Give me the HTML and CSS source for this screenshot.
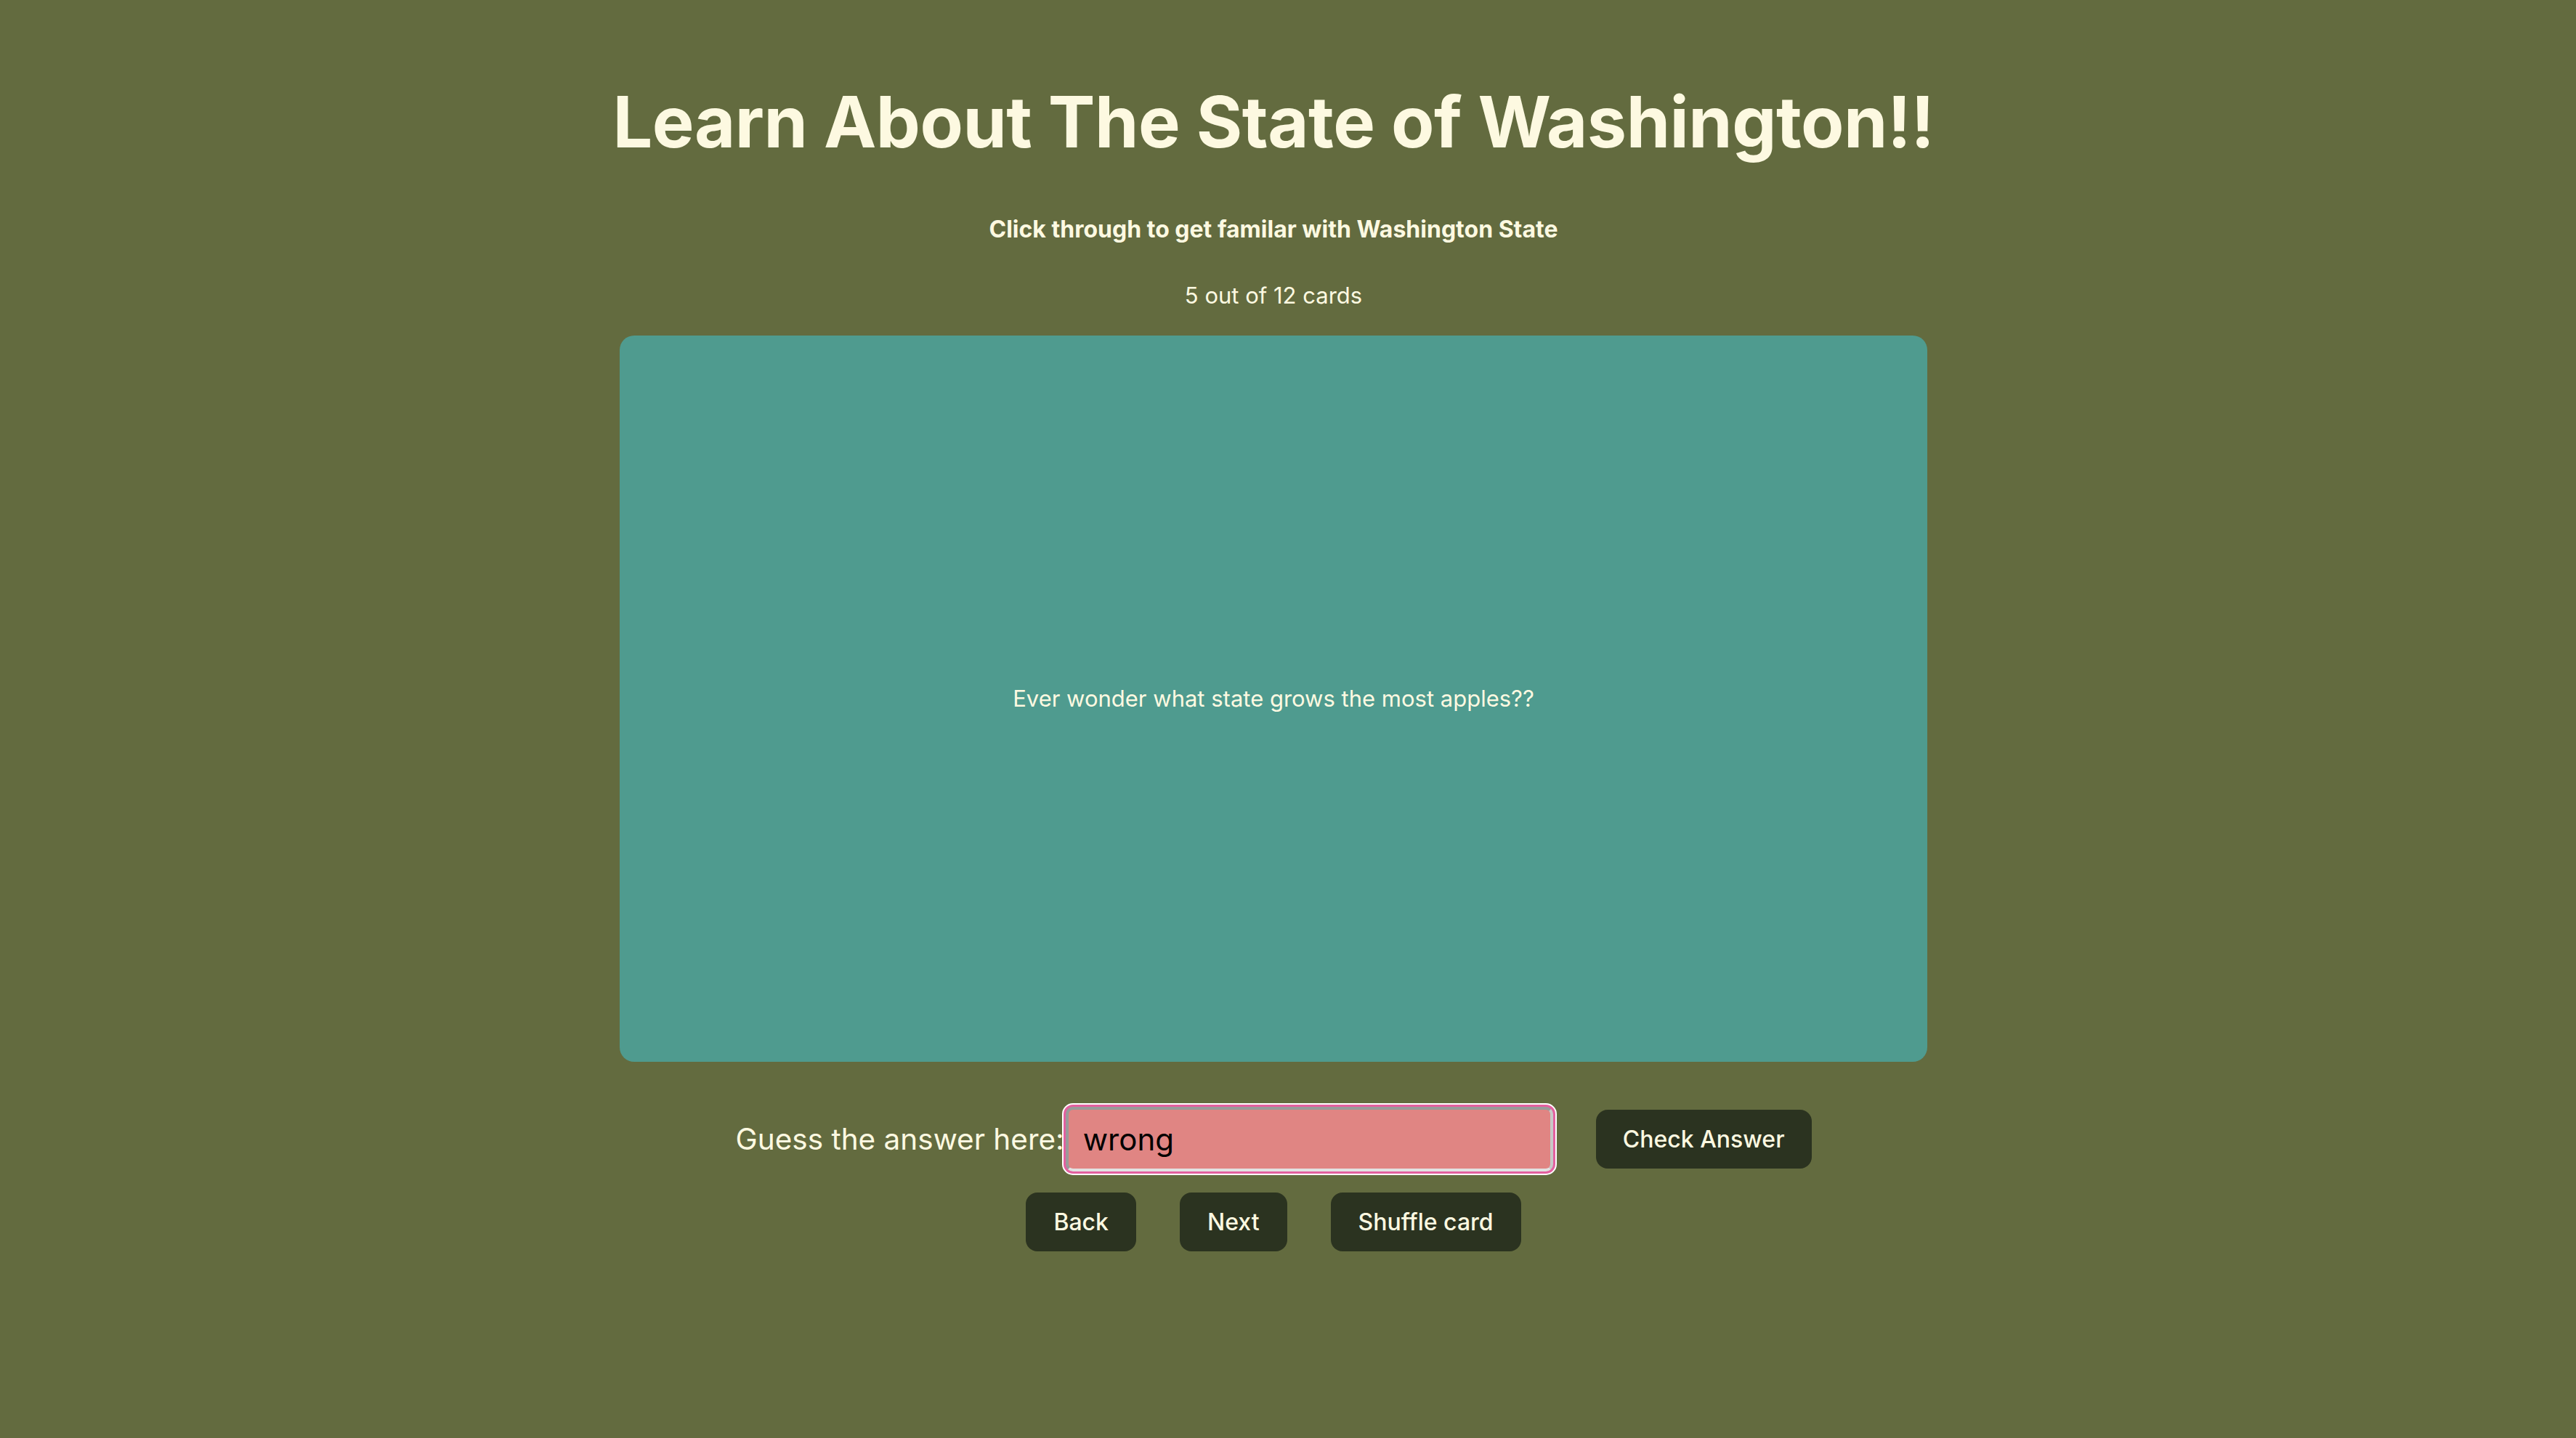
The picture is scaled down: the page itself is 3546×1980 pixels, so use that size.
FILE: index.html
```html
<!DOCTYPE html>
<html lang="en">
<head>
<meta charset="utf-8">
<title>Learn About The State of Washington</title>
<link rel="stylesheet" href="styles.css">
</head>
<body>
<div class="page">
  <h1 class="title">Learn About The State of Washington!!</h1>
  <h4 class="subtitle">Click through to get familar with Washington State</h4>
  <p class="counter">5 out of 12 cards</p>
  <div class="card">
    <p class="card-text">Ever wonder what state grows the most apples??</p>
  </div>
  <div class="guess-row">
    <label class="guess-label" for="guess">Guess the answer here:</label>
    <input id="guess" class="guess-input wrong" type="text" value="wrong">
    <button class="btn check-btn">Check Answer</button>
  </div>
  <div class="nav-row">
    <button class="btn">Back</button>
    <button class="btn">Next</button>
    <button class="btn">Shuffle card</button>
  </div>
</div>
</body>
</html>
```
FILE: styles.css
```css
html, body {
  margin: 0;
  padding: 0;
}
body {
  background: #636b3f;
  color: #fdf9e1;
  font-family: Inter, "Noto Sans", "Liberation Sans", sans-serif;
  width: 3546px;
  height: 1980px;
  overflow: hidden;
}
.page {
  width: 3506px;
  padding-top: 112px;
  display: flex;
  flex-direction: column;
  align-items: center;
  text-align: center;
}
.title {
  margin: 0;
  font-size: 97px;
  line-height: 112px;
  font-weight: 700;
  letter-spacing: -0.5px;
}
.subtitle {
  margin: 72px 0 0;
  font-size: 32px;
  line-height: 40px;
  font-weight: 700;
}
.counter {
  margin: 51px 0 0;
  font-size: 31px;
  line-height: 40px;
  font-weight: 400;
}
.card {
  margin-top: 35px;
  width: 1800px;
  height: 1000px;
  border-radius: 20px;
  background: #4f9b8f;
  display: flex;
  align-items: center;
  justify-content: center;
}
.card-text {
  margin: 0;
  font-size: 31px;
  line-height: 40px;
}
.guess-row {
  margin-top: 62px;
  display: flex;
  align-items: center;
}
.guess-label {
  font-size: 40.5px;
  line-height: 60px;
}
.guess-input {
  box-sizing: border-box;
  width: 671px;
  height: 89px;
  margin: 0 59px 0 2px;
  padding: 0 0 0 20px;
  border: 4px solid;
  border-color: #9a9a9a #c8c8c8 #e2e2e2 #9a9a9a;
  border-radius: 10px;
  background: #e08583;
  color: #000;
  font-family: Inter, "Noto Sans", "Liberation Sans", sans-serif;
  font-size: 42px;
  outline: none;
  box-shadow: 0 0 0 3px #e3609f, 0 0 0 5px #ffffff;
}
.btn {
  box-sizing: border-box;
  height: 81px;
  padding: 0 37px;
  border: 1px solid transparent;
  border-radius: 16px;
  background: #2b3320;
  color: #fdf9e1;
  font-family: Inter, "Noto Sans", "Liberation Sans", sans-serif;
  font-size: 32px;
  font-weight: 500;
  line-height: 1;
}
.check-btn {
  padding: 0 36px;
}
.nav-row {
  margin-top: 29px;
  display: flex;
  gap: 60px;
}
```
